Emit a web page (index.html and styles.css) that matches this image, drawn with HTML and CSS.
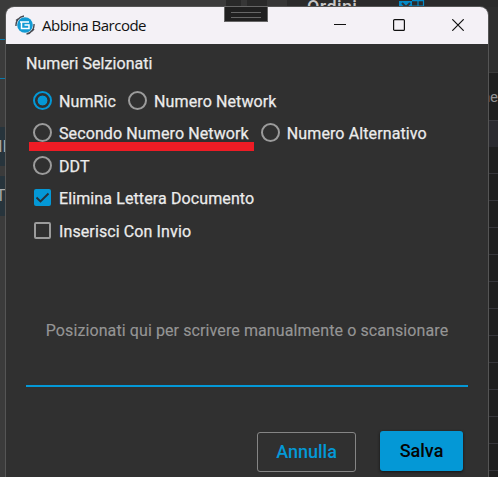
FILE: index.html
```html
<!DOCTYPE html>
<html lang="it">
<head>
<meta charset="utf-8">
<title>Abbina Barcode</title>
<link rel="stylesheet" href="styles.css">
</head>
<body>
<div class="desktop">
  <div class="back-top"><i class="seg s1"></i><i class="seg s2"></i><i class="seg s3"></i><span class="orders">Ordini</span>
    <svg class="excel" width="27" height="16" viewBox="0 0 27 16" fill="none" stroke="#048bc8"><path d="M1 1h13v16H1z" fill="#048bc8" stroke="none"/><path d="M4 3l4 4 4-4" stroke="#30343a" stroke-width="2"/><path d="M14 .7h11.500v14H14M14 6h12M20 0v14" stroke-width="1.200"/></svg>
  </div>
  <div class="back-left"><i class="field"></i><i class="field second"></i><span class="tile">NI</span><span class="tile tile-two">TO</span></div>
  <div class="back-right"><span class="column-name">me</span><i class="selected-row"></i><i class="grid-rows"></i></div>

  <main class="window">
    <header class="titlebar">
      <svg class="logo" width="20" height="20" viewBox="0 0 20 20" fill="none"><circle cx="10" cy="10" r="7.800" fill="#129bd4"/><path d="M1 11A9.200 9.200 0 0 1 9 1M11.500 19A9.200 9.200 0 0 0 19 9" stroke="#454850" stroke-width="1.400"/><path d="M1 5.500L3 4M17 16l2-2" stroke="#454850" stroke-width="1.500"/><path d="M5 7H14M6.500 7v6.500h7.500v-3.500H9.500" stroke="#fff" stroke-width="1.500"/></svg>
      <h1>Abbina Barcode</h1>
      <div class="controls">
        <svg width="12" height="12" viewBox="0 0 12 12"><path d="M0 5.500h12"/></svg>
        <svg width="12" height="12" viewBox="0 0 12 12"><rect x=".6" y=".6" width="10.800" height="10.800" rx="1"/></svg>
        <svg width="12" height="12" viewBox="0 0 12 12"><path d="M.3.3l11.400 11.400M11.700.3L.3 11.700"/></svg>
      </div>
    </header>
    <section class="content">
      <h2>Numeri Selzionati</h2>
      <div class="options">
        <div class="row"><label class="option"><i class="radio checked"></i><span>NumRic</span></label><label class="option"><i class="radio"></i><span>Numero Network</span></label></div>
        <div class="row"><label class="option"><i class="radio"></i><span>Secondo Numero Network</span></label><label class="option"><i class="radio"></i><span>Numero Alternativo</span></label><i class="underline"></i></div>
        <div class="row"><label class="option"><i class="radio"></i><span>DDT</span></label></div>
        <div class="row"><label class="option"><i class="check checked"><svg width="17" height="17" viewBox="0 0 17 17"><path d="M2.500 8.500l4 4 8-8" fill="none" stroke="#263039" stroke-width="1.900"/></svg></i><span>Elimina Lettera Documento</span></label></div>
        <div class="row"><label class="option"><i class="check"></i><span>Inserisci Con Invio</span></label></div>
      </div>
      <div class="entry"><span>Posizionati qui per scrivere manualmente o scansionare</span></div>
      <footer><button class="cancel">Annulla</button><button class="save">Salva</button></footer>
    </section>
  </main>
  <div class="handle"></div>
</div>
</body>
</html>
```
FILE: styles.css
```css
* { box-sizing: border-box; }
body { margin: 0; font-family: Roboto, "Liberation Sans", sans-serif; }
.desktop { position: relative; width: 498px; height: 477px; overflow: hidden; background: #3b3b3b; }
.back-top { position: absolute; inset: 0 0 auto 0; height: 72px; background: linear-gradient(90deg, #3b3b3b 226px, #363636 226px 287px, #2e2e2e 287px); }
.seg { position: absolute; top: 0; height: 7px; background: #292929; }
.s1 { left: 226px; width: 15px; }
.s2 { left: 247px; width: 20px; }
.s3 { left: 287px; width: 211px; background: #2b2b2b; }
.orders { position: absolute; left: 307px; top: -4px; font-size: 18px; line-height: 21px; font-weight: 500; color: #c7c7c7; letter-spacing: .4px; }
.excel { position: absolute; left: 398px; top: 0; }
.back-left { position: absolute; left: 0; top: 0; width: 6px; height: 477px; overflow: hidden; }
.field { position: absolute; left: 0; top: 39px; width: 6px; height: 1px; background: #087cae; }
.field.second { top: 78px; }
.tile { position: absolute; left: 0; top: 127px; width: 30px; height: 39px; background: #27343c; color: #aaa; font-size: 16px; line-height: 39px; text-indent: -9px; }
.tile-two { top: 176px; height: 40px; text-indent: -4px; }
.back-right { position: absolute; left: 488px; top: 72px; width: 10px; height: 405px; overflow: hidden; background: #1f1f1f; border-top: 1px solid #3a3a3a; }
.column-name { position: absolute; right: 0; top: 14px; color: #929292; font-size: 15px; line-height: 20px; }
.selected-row { position: absolute; inset: 47px 0 auto 0; height: 27px; background: #2b2b30; border-top: 1px solid #3b3b40; }
.grid-rows { position: absolute; inset: 74px 0 0 0; background: repeating-linear-gradient(#1f1f1f 0 26px, #36363b 26px 27px); }
.window { position: absolute; left: 5px; top: 6px; width: 484px; height: 490px; border: 1px solid #555; border-radius: 9px; background: #303030; overflow: hidden; }
.titlebar { display: flex; align-items: center; height: 37px; padding: 0 24px 0 9px; background: #f4f1f6; }
.logo { position: relative; top: -1px; margin-right: 7px; flex: none; }
h1 { position: relative; top: -1px; margin: 0; font: 400 15px/20px "Open Sans", "Noto Sans", sans-serif; color: #111; letter-spacing: -.5px; }
.controls { display: flex; gap: 47px; margin-left: auto; position: relative; top: -1px; }
.controls svg { fill: none; stroke: #111; stroke-width: 1.2; }
.content { padding: 10px 20px 0; color: #ececec; font-size: 16px; }
h2 { margin: 0; font-size: 16px; line-height: 20px; font-weight: 400; letter-spacing: .06px; -webkit-text-stroke: .25px; }
.options { display: grid; grid-template-rows: repeat(5, 32.5px); margin-top: 10px; padding-left: 7px; }
.row { position: relative; display: flex; align-items: center; gap: 12px; }
.option { display: flex; align-items: center; gap: 7px; white-space: nowrap; letter-spacing: .11px; -webkit-text-stroke: .25px; }
.option span { line-height: 20px; padding-top: 3px; }
.radio { flex: none; width: 19px; height: 19px; border: 2px solid #9b9b9b; border-radius: 50%; }
.radio.checked { border-color: #0498d6; background: radial-gradient(circle, #0498d6 0 4.7px, transparent 5.2px); }
.check { flex: none; width: 17px; height: 17px; margin: 0 1px; border: 2px solid #9b9b9b; border-radius: 2px; }
.check.checked { border: 0; background: #0498d6; }
.check svg { display: block; }
.underline { position: absolute; left: -4px; top: 25px; width: 225px; height: 9px; background: #ee1c25; }
.entry { height: 93px; margin-top: 47px; display: flex; justify-content: center; border-bottom: 2px solid #0498d6; color: #959595; letter-spacing: .1px; white-space: nowrap; -webkit-text-stroke: .15px; }
.entry span { margin-top: 27px; line-height: 20px; }
footer { display: flex; justify-content: flex-end; align-items: center; gap: 24px; margin-top: 44px; padding-right: 5px; }
button { height: 40px; padding: 0; border-radius: 3px; font: 500 18px/20px Roboto, sans-serif; }
.cancel { width: 99px; border: 1px solid #858585; background: transparent; color: #0498d6; position: relative; top: 1px; }
.save { width: 83px; border: 0; background: #0498d6; color: #050505; box-shadow: 0 1px 3px #111; }
.handle { position: absolute; left: 224px; top: 6px; width: 44px; height: 16px; border: 1px solid #666; background: #202020; }
.handle::before { content: ""; position: absolute; left: 6px; top: 5px; width: 30px; height: 4px; border: solid #666; border-width: 1px 0; }
```
